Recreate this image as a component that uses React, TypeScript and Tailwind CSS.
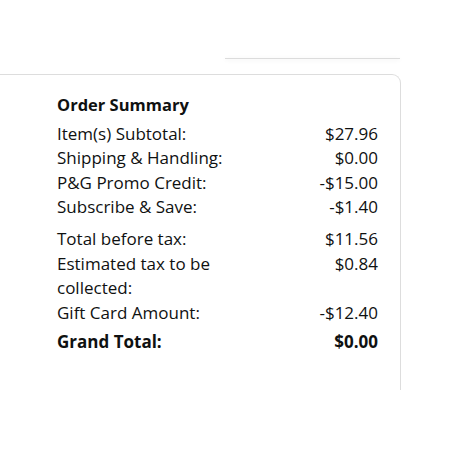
const rows = [
  { label: "Item(s) Subtotal:", value: "$27.96" },
  { label: "Shipping & Handling:", value: "$0.00" },
  { label: "P&G Promo Credit:", value: "-$15.00" },
  { label: "Subscribe & Save:", value: "-$1.40" },
];

const totals = [
  { label: "Total before tax:", value: "$11.56" },
  { label: "Estimated tax to be collected:", value: "$0.84" },
  { label: "Gift Card Amount:", value: "-$12.40" },
];

function Row({ label, value }: { label: string; value: string }) {
  return (
    <div className="flex justify-between items-start">
      <span className="w-[175px]">{label}</span>
      <span className="text-right">{value}</span>
    </div>
  );
}

export default function App() {
  return (
    <div
      className="w-[450px] h-[450px] bg-white text-[#0f1111] text-[17px] leading-[24.6px]"
      style={{ fontFamily: '"Open Sans", "Noto Sans", Arial, sans-serif' }}
    >
      <div className="h-[59px] flex justify-end pr-[50px]">
        <div className="w-[175px] self-end h-px bg-[#dcdcdc] shadow-[0_1px_4px_rgba(0,0,0,0.1)]" />
      </div>
      <div className="mt-[15px] w-[401px] h-[316px] border-t border-r border-[#dddddd] rounded-tr-[9px] pl-[57px] pr-[22px] pt-[18px]">
        <h2 className="font-bold text-[16.5px] mb-[4px]">Order Summary</h2>
        {rows.map((r) => (
          <Row key={r.label} {...r} />
        ))}
        <div className="h-[7px]" />
        {totals.map((r) => (
          <Row key={r.label} {...r} />
        ))}
        <div className="flex justify-between mt-[5px] font-bold">
          <span>Grand Total:</span>
          <span>$0.00</span>
        </div>
      </div>
    </div>
  );
}
